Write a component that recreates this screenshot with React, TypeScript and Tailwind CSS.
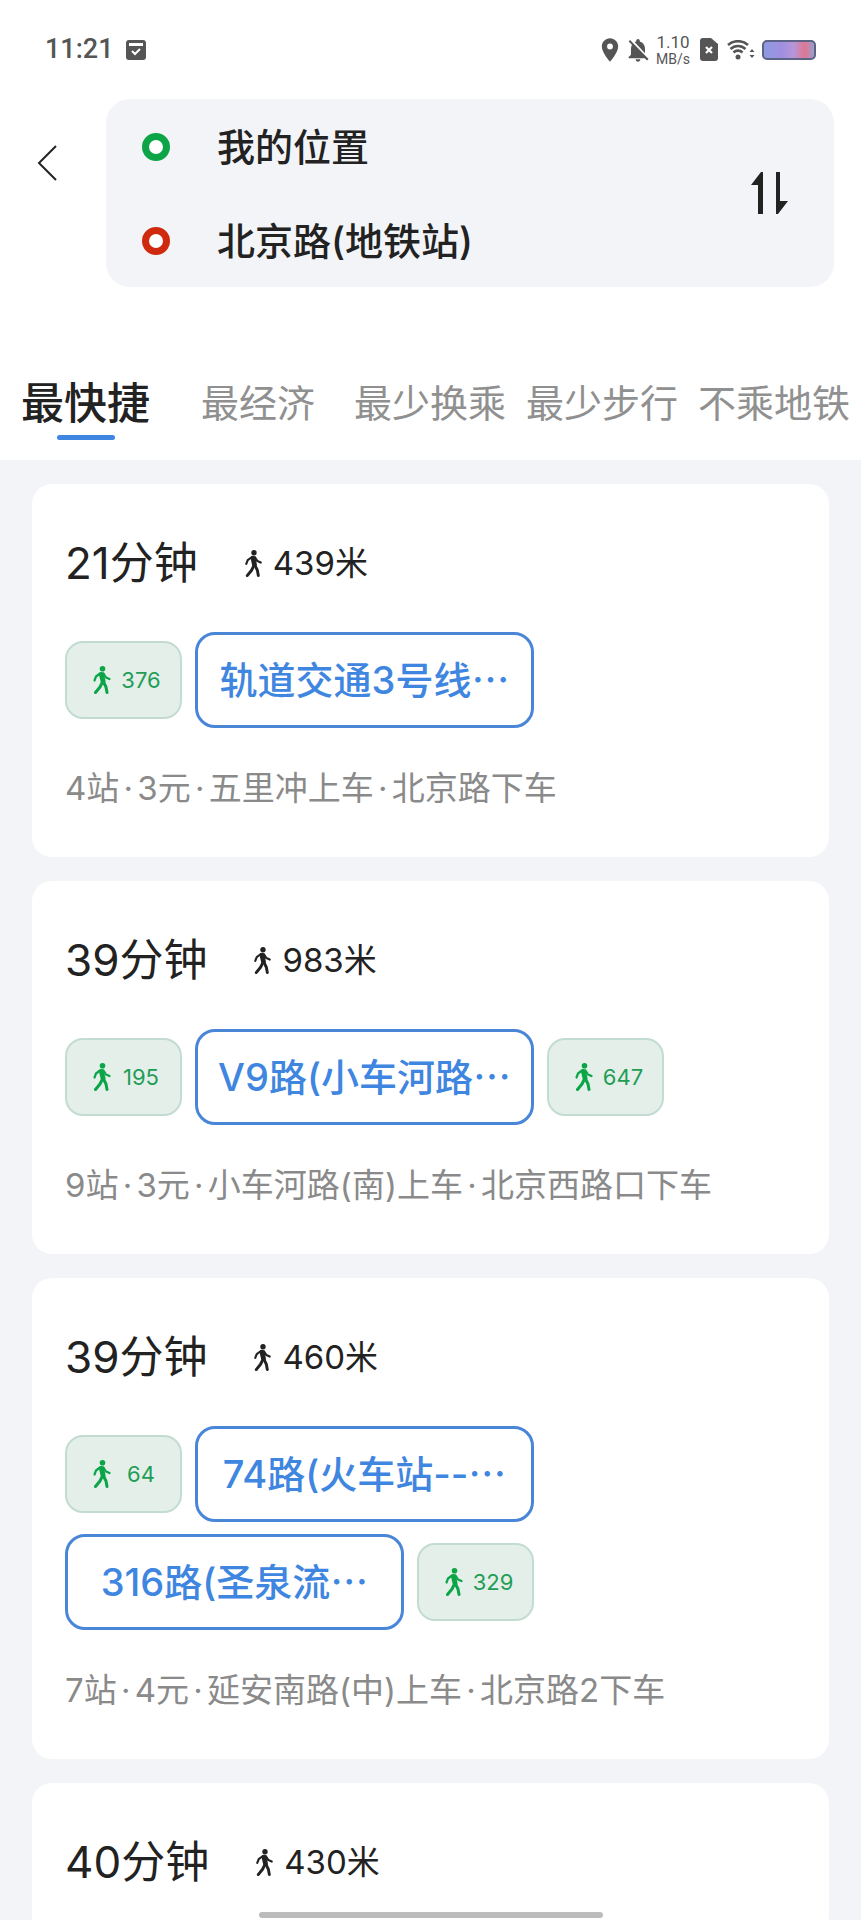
import { MdLocationOn, MdNotificationsOff } from 'react-icons/md'

const TABS = [
  { label: '最经济', gap: 'ml-[51px]' },
  { label: '最少换乘', gap: 'ml-[39px]' },
  { label: '最少步行', gap: 'ml-[20px]' },
  { label: '不乘地铁', gap: 'ml-[20px]' },
]

type Seg = { walk?: string; line?: string }

const ROUTES: { time: string; dist: string; segs: Seg[]; meta: string[] }[] = [
  {
    time: '21分钟',
    dist: '439米',
    segs: [{ walk: '376' }, { line: '轨道交通3号线⋯' }],
    meta: ['4站', '3元', '五里冲上车', '北京路下车'],
  },
  {
    time: '39分钟',
    dist: '983米',
    segs: [{ walk: '195' }, { line: 'V9路(小车河路⋯' }, { walk: '647' }],
    meta: ['9站', '3元', '小车河路(南)上车', '北京西路口下车'],
  },
  {
    time: '39分钟',
    dist: '460米',
    segs: [{ walk: '64' }, { line: '74路(火车站--⋯' }, { line: '316路(圣泉流⋯' }, { walk: '329' }],
    meta: ['7站', '4元', '延安南路(中)上车', '北京路2下车'],
  },
  { time: '40分钟', dist: '430米', segs: [], meta: [] },
]

function WalkIcon({ className }: { className: string }) {
  return (
    <svg className={className} viewBox="0 0 18 28" fill="none" stroke="currentColor" strokeLinecap="round" strokeLinejoin="round">
      <circle cx="9.500" cy="2.800" r="2.800" fill="currentColor" stroke="none" />
      <path d="M8.500 8.500L10 15" strokeWidth="5" />
      <path d="M7 7.500L3 10.500L1.500 14.500" strokeWidth="2.200" />
      <path d="M10.500 7.500L13 11.500L16.500 13" strokeWidth="2.200" />
      <path d="M9.500 16L7 21L2.500 26.500" strokeWidth="3" />
      <path d="M10.500 16L13 21L14 26.500" strokeWidth="3" />
    </svg>
  )
}

function StatusBar() {
  return (
    <div className="h-[99px] flex items-center justify-between pl-[45px] pr-[45px] text-[#555] font-['Roboto',sans-serif]">
      <div className="flex items-center gap-[11px]">
        <span className="text-[27px] leading-none font-medium">11:21</span>
        <svg width="22" height="22" viewBox="0 0 22 22">
          <rect x="1" y="1" width="20" height="20" rx="3" fill="#555" />
          <rect x="4" y="4" width="14" height="3" fill="#fff" />
          <path d="M7 12l3 3 5-5" fill="none" stroke="#fff" strokeWidth="2" />
        </svg>
      </div>
      <div className="flex items-center">
        <MdLocationOn className="w-[28px] h-[28px] text-[#555]" />
        <MdNotificationsOff className="w-[28px] h-[28px] text-[#555]" />
        <div className="ml-[3px] w-[36px] flex flex-col items-center leading-none">
          <span className="text-[17px]">1.10</span>
          <span className="text-[14px] mt-[1px]">MB/s</span>
        </div>
        <svg className="ml-[9px]" width="18" height="23" viewBox="0 0 18 23">
          <path d="M3 0h8l7 6v14a3 3 0 0 1-3 3H3a3 3 0 0 1-3-3V3a3 3 0 0 1 3-3z" fill="#555" />
          <path d="M6 9l6 6M12 9l-6 6" stroke="#fff" strokeWidth="2.200" />
        </svg>
        <svg className="ml-[9px]" width="28" height="20" viewBox="0 0 28 20">
          <circle cx="11" cy="17" r="2.500" fill="#555" />
          <path d="M6.500 12.500a6.400 6.400 0 0 1 9 0M3.500 9a10.800 10.800 0 0 1 15 0M1 5a15 15 0 0 1 20 0" fill="none" stroke="#555" strokeWidth="2.600" />
          <path d="M25 9l-2.500 3h5zM25 18l-2.500-3h5z" fill="#555" />
        </svg>
        <div className="ml-[7px] w-[54px] h-[20px] rounded-[5px] border-2 border-[#5c6486] bg-[linear-gradient(90deg,#8d9be0_0%,#a08fe0_35%,#b795d8_60%,#e0768f_82%,#9a9fd0_100%)]" />
      </div>
    </div>
  )
}

function LocationPanel() {
  return (
    <div className="flex items-start pl-[37px] pr-[27px]">
      <svg className="mt-[46px] shrink-0" width="20" height="36" viewBox="0 0 20 36">
        <path d="M19 1L2 18l17 17" fill="none" stroke="#222" strokeWidth="2" />
      </svg>
      <div className="ml-[49px] flex-1 h-[188px] rounded-[24px] bg-[#f3f4f8] flex items-center pr-[46px]">
        <div className="flex-1 pl-[36px] text-[38px] leading-none font-medium text-[#222]">
          <div className="h-[95px] flex items-center">
            <span className="w-[28px] h-[28px] rounded-full border-[7px] border-[#0ba548] bg-white" />
            <span className="ml-[47px]">我的位置</span>
          </div>
          <div className="h-[93px] flex items-center">
            <span className="w-[28px] h-[28px] rounded-full border-[7px] border-[#cf2a0e] bg-white" />
            <span className="ml-[47px]">北京路(地铁站)</span>
          </div>
        </div>
        <svg width="37" height="42" viewBox="0 0 37 42">
          <path d="M12 0V42H7V13H0L10 0z" fill="#222" />
          <path d="M25 0H29V29H37L27 42H25z" fill="#222" />
        </svg>
      </div>
    </div>
  )
}

function Tabs() {
  return (
    <div className="flex items-start pl-[21px] pt-[91px] pb-[20px]">
      <div className="flex flex-col items-center">
        <span className="text-[43px] leading-[50px] font-medium text-[#222] whitespace-nowrap">最快捷</span>
        <span className="mt-[7px] w-[58px] h-[5px] rounded-full bg-[#3f86e0]" />
      </div>
      {TABS.map(t => (
        <span key={t.label} className={`${t.gap} text-[38px] leading-[50px] text-[#909090] whitespace-nowrap`}>
          {t.label}
        </span>
      ))}
    </div>
  )
}

function Segment({ seg }: { seg: Seg }) {
  if (seg.line) {
    return (
      <div className="w-[339px] h-[96px] rounded-[20px] border-[3px] border-[#4a86d8] bg-white flex items-center justify-center text-[38px] leading-none font-medium text-[#3f86e0] whitespace-nowrap">
        {seg.line}
      </div>
    )
  }
  return (
    <div className="w-[117px] h-[78px] rounded-[18px] border-2 border-[#c3dcd1] bg-[#e4efea] flex items-center pl-[26px]">
      <WalkIcon className="w-[18px] h-[28px] text-[#0ba548]" />
      <span className="flex-1 pr-[9px] text-center text-[22px] leading-none text-[#1f9d55]">{seg.walk}</span>
    </div>
  )
}

export default function App() {
  return (
    <div className="relative w-[861px] h-[1920px] overflow-hidden bg-white font-['Inter','Noto_Sans_CJK_SC',sans-serif]">
      <StatusBar />
      <LocationPanel />
      <Tabs />
      <div className="h-[1460px] bg-[#f3f4f8] px-[32px] pt-[24px] flex flex-col gap-[24px]">
        {ROUTES.map((r, i) => (
          <div key={i} className="rounded-[20px] bg-white px-[33px] pt-[49px] pb-[45px]">
            <div className="flex items-center h-[60px]">
              <span className="text-[44px] leading-none text-[#222]">{r.time}</span>
              <WalkIcon className="ml-[46px] w-[19px] h-[27px] text-[#222]" />
              <span className="ml-[10px] text-[33px] leading-none text-[#222]">{r.dist}</span>
            </div>
            {r.segs.length > 0 && (
              <>
                <div className="mt-[39px] flex flex-wrap items-center gap-x-[13px] gap-y-[12px]">
                  {r.segs.map((s, j) => (
                    <Segment key={j} seg={s} />
                  ))}
                </div>
                <div className="mt-[36px] flex text-[33px] leading-[48px] text-[#8a8a8a] whitespace-nowrap">
                  {r.meta.map((m, j) => (
                    <span key={j} className="flex">
                      {j > 0 && <span className="w-[18px] text-center">·</span>}
                      {m}
                    </span>
                  ))}
                </div>
              </>
            )}
          </div>
        ))}
      </div>
      <div className="absolute left-[259px] top-[1912px] w-[344px] h-[6px] rounded-full bg-[#bcbcbc]" />
    </div>
  )
}
